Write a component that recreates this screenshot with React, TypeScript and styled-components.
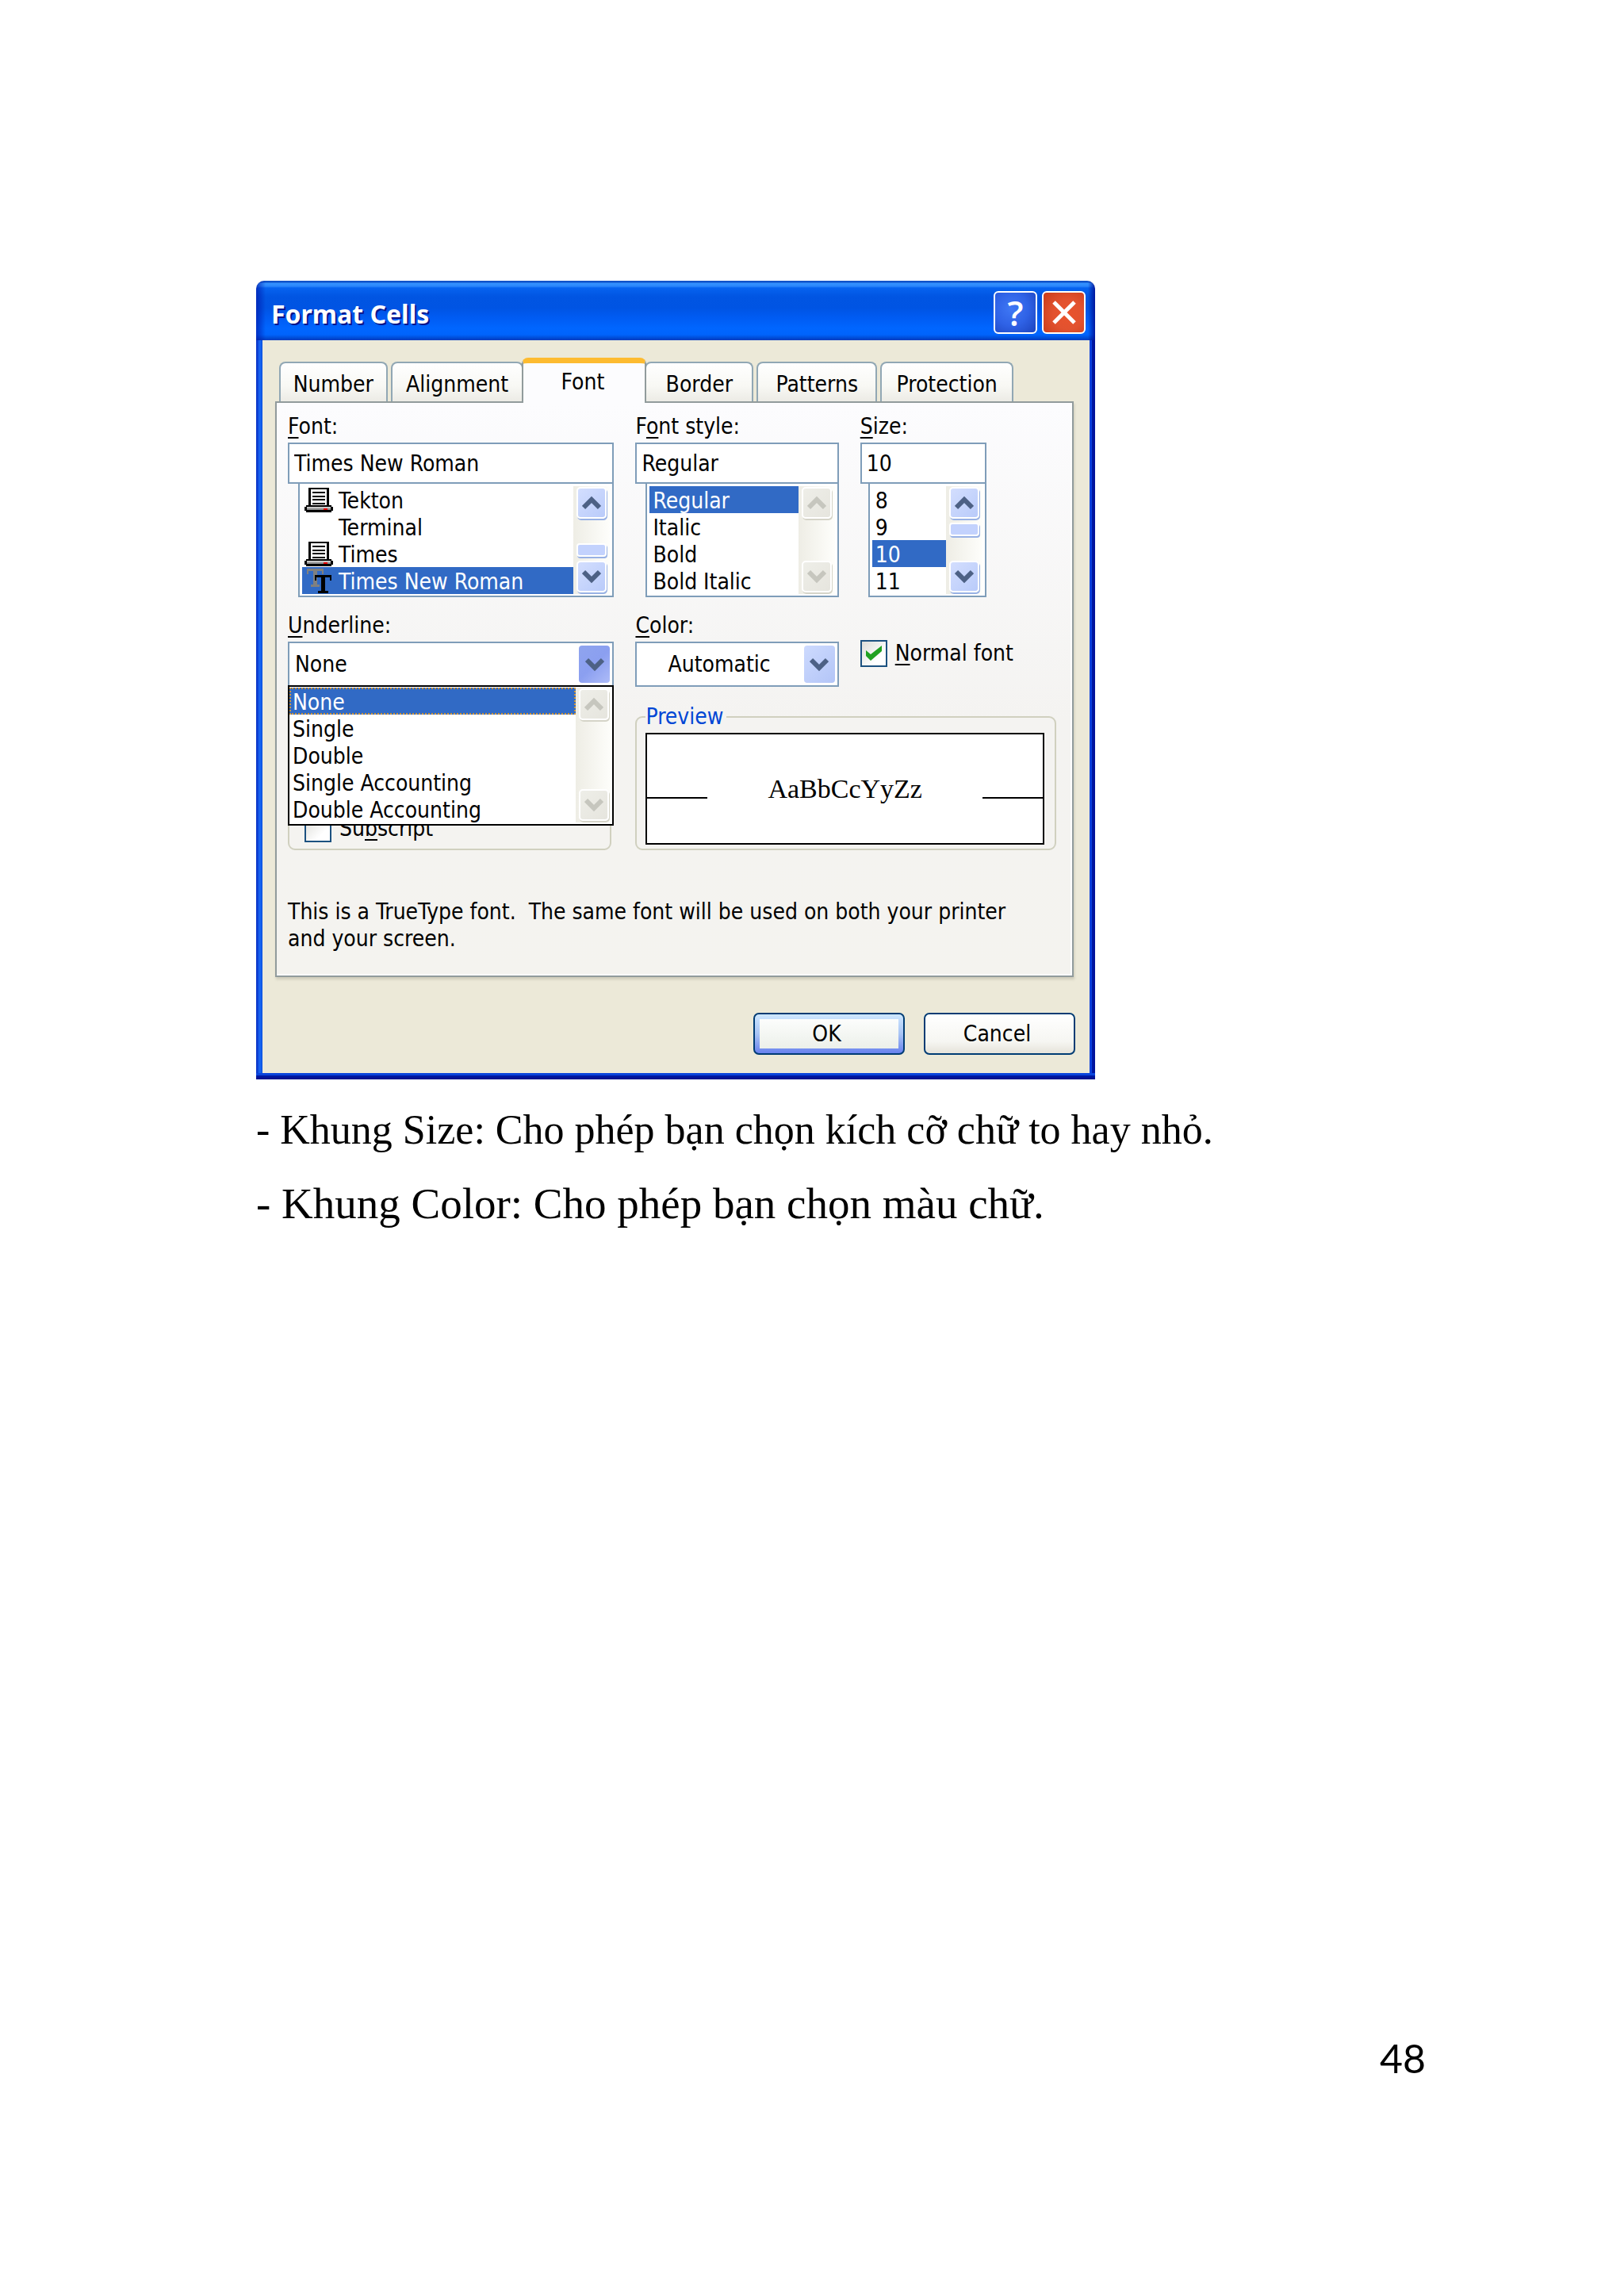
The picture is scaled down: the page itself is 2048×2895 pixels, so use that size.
import React, { useState } from "react";
import styled, { createGlobalStyle, css } from "styled-components";

const uiFont = `"DejaVu Sans Condensed", "Noto Sans", "Open Sans", sans-serif`;
const frameBlue = "#7f9db9";

const GlobalStyle = createGlobalStyle`
  *, *::before, *::after { box-sizing: border-box; }
  body { margin: 0; background: #fff; color: #000; }
  button, input, select { font: inherit; color: inherit; margin: 0; }
`;

const Page = styled.main`
  min-height: 100vh;
  display: flex;
  flex-direction: column;
  padding: 354px 250px 270px 323px;
`;

/* ---------- window frame ---------- */

const Dialog = styled.section`
  width: 100%;
  max-width: 1058px;
  font: 28px/34px ${uiFont};
  background: #ece9d8;
  border-radius: 10px 10px 0 0;
`;

const TitleBar = styled.header`
  height: 75px;
  display: flex;
  align-items: center;
  justify-content: space-between;
  gap: 6px;
  padding: 4px 12px 0 19px;
  border-radius: 10px 10px 0 0;
  background:
    linear-gradient(90deg, rgba(0, 24, 170, 0.7) 0, rgba(0, 24, 170, 0) 12px),
    linear-gradient(270deg, rgba(0, 16, 150, 0.9) 0, rgba(0, 24, 170, 0) 9px),
    linear-gradient(180deg, #0f52c9 0, #0f52c9 2px, #3593ff 3px, #2a86fb 7px, #0663f0 9px, #0155e2 20px, #0054e3 34px,
      #005bf2 46px, #0066ff 60px, #0064fc 68px, #0047cf 73px, #003cc0 75px);
`;

const TitleText = styled.h1`
  flex: 1;
  margin: 0;
  padding-top: 4px;
  font: 700 32px/40px "Noto Sans", "Open Sans", sans-serif;
  color: #fff;
  text-shadow: 2px 2px 0 #06158c;
`;

const CaptionButton = styled.button<{ $close?: boolean }>`
  width: 55px;
  height: 54px;
  display: grid;
  place-items: center;
  padding: 0;
  border: 2px solid #fff;
  border-radius: 6px;
  font: 600 44px/50px "Open Sans", "Noto Sans", sans-serif;
  color: #fff;
  background: ${(p) =>
    p.$close
      ? "radial-gradient(circle at 60% 55%, #e9532c 0, #e2522f 45%, #c93c1a 100%)"
      : "radial-gradient(circle at 40% 40%, #3f78f5 0, #2f62e6 50%, #1c43bd 100%)"};
`;

const Frame = styled.div`
  padding: 22px 7px 8px 8px;
  background:
    linear-gradient(0deg, #00108a 0, #001aa8 5px, #0a45dc 5px, #0a45dc 8px, transparent 8px),
    linear-gradient(270deg, #00129a 0, #0018a4 4px, #0a40dc 4px, #0a40dc 7px, transparent 7px),
    linear-gradient(90deg, #0a32c0 0, #0b3fd6 2px, #1a66f2 4px, #1462f0 6px, #0a4edc 8px, transparent 8px);
`;

/* ---------- tabs ---------- */

const TabList = styled.div`
  display: flex;
  align-items: flex-end;
  gap: 4px;
  padding: 0 96px 0 21px;
  height: 57px;
`;

const Tab = styled.button<{ $grow: number; $active?: boolean }>`
  flex: ${(p) => p.$grow} 1 0;
  min-width: 0;
  padding: 6px 0 0;
  line-height: 42px;
  height: 50px;
  margin-bottom: 2px;
  border: 2px solid #919b9c;
  border-color: #91a7b4 #91a7b4 transparent;
  border-bottom: 0;
  border-radius: 8px 8px 0 0;
  background: linear-gradient(#fff, #f8f8f4 60%, #ecebe5);
  ${(p) =>
    p.$active &&
    css`
      position: relative;
      z-index: 1;
      height: 57px;
      margin: 0 -6px;
      padding: 0 4px 2px 0;
      background: #fcfcfe;
      border-top: 7px solid #ffc73c;
      border-color: #fdbb30 #919b9c transparent;
    `}
`;

const Pane = styled.div`
  margin: -2px 20px 0 16px;
  padding: 13px 20px 29px 14px;
  border: 2px solid #919b9c;
  background: linear-gradient(#fcfcfe 0, #f4f3f1 55%, #f4f3ef 100%);
  box-shadow: inset -2px -2px 0 #fff, 1px 3px 3px #cfccbb;
`;

/* ---------- fields ---------- */

const Fields = styled.div`
  display: grid;
  grid-template-columns: 411fr 256fr 247fr;
  column-gap: 27px;
`;

const Field = styled.div<{ $narrow?: boolean }>`
  max-width: ${(p) => (p.$narrow ? "159px" : "none")};
  margin-bottom: 19px;
`;

const LowField = styled(Field)`
  margin-bottom: 21px;
`;

const Label = styled.label`
  display: block;
  margin-bottom: 3px;
`;

const Mnemonic = styled.u`
  text-decoration-thickness: 2px;
  text-underline-offset: 4px;
  text-decoration-skip-ink: none;
`;

const TextBox = styled.input`
  display: block;
  width: 100%;
  height: 52px;
  padding: 0 6px;
  border: 2px solid ${frameBlue};
  border-radius: 0;
  background: #fff;
  outline: none;
`;

const ListBox = styled.div<{ $indent: number }>`
  display: flex;
  height: 145px;
  margin: -2px 0 0 ${(p) => p.$indent}px;
  padding: 3px 3px 2px;
  border: 2px solid ${frameBlue};
  background: #fff;
`;

const Options = styled.ul`
  flex: 1;
  min-width: 0;
  margin: 0;
  padding: 0;
  list-style: none;
`;

const Option = styled.li<{ $selected?: boolean; $focus?: boolean; $icons?: boolean }>`
  display: flex;
  align-items: center;
  gap: 6px;
  height: 34px;
  padding-left: ${(p) => (p.$icons ? 2 : 4)}px;
  line-height: 38px;
  white-space: nowrap;
  cursor: default;
  color: ${(p) => (p.$selected ? "#fff" : "#000")};
  background: ${(p) => (p.$selected ? "#316ac5" : "transparent")};
  outline: ${(p) => (p.$focus ? "2px dotted #ce953a" : "none")};
  outline-offset: -2px;
`;

const OptionText = styled.span`
  padding-top: 4px;
`;

const IconSlot = styled.span`
  flex: none;
  width: 38px;
  height: 34px;
`;

/* ---------- scroll bars and arrows ---------- */

const Track = styled.div`
  flex: none;
  width: 46px;
  display: flex;
  flex-direction: column;
  align-items: flex-start;
  padding: 1px 2px 2px 4px;
  background: linear-gradient(90deg, #eeede5, #fefefb);
`;

const ScrollButton = styled.button`
  width: 38px;
  height: 40px;
  display: grid;
  place-items: center;
  padding: 0;
  border: 2px solid #fff;
  border-radius: 5px;
  background: linear-gradient(135deg, #d3defe, #b9cbfa);
  box-shadow: 1px 2px 0 #98b1e4;
  color: #4d6185;
  &:disabled {
    background: linear-gradient(135deg, #eeeee8, #e6e5de);
    box-shadow: 1px 2px 0 #d5d4c8;
    color: #c6c6be;
  }
`;

const Gap = styled.span<{ $share: number }>`
  flex: ${(p) => p.$share} 1 0;
`;

const Thumb = styled.span`
  width: 38px;
  height: 17px;
  border: 2px solid #fff;
  border-radius: 4px;
  background: #c3d2fd;
  box-shadow: 1px 2px 0 #98b1e4;
`;

const Combo = styled.div`
  position: relative;
  display: flex;
  height: 57px;
  padding: 3px;
  border: 2px solid ${frameBlue};
  background: #fff;
`;

const ComboSelect = styled.select<{ $indent?: boolean }>`
  flex: 1;
  min-width: 0;
  appearance: none;
  border: 0;
  outline: none;
  padding: 0 0 0 ${(p) => (p.$indent ? 36 : 4)}px;
  background: #fff;
`;

const ComboArrow = styled.span<{ $pressed?: boolean }>`
  flex: none;
  width: 39px;
  display: grid;
  place-items: center;
  border-radius: 4px;
  pointer-events: none;
  color: #4d6185;
  background: ${(p) =>
    p.$pressed ? "linear-gradient(135deg, #8fa4ee, #8b9ff0 50%, #aebcf8)" : "linear-gradient(135deg, #cddafe, #b3c5f7)"};
`;

const Popup = styled.div`
  position: absolute;
  z-index: 2;
  top: 53px;
  left: -2px;
  right: -2px;
  display: flex;
  padding: 1px 0 2px 0;
  border: 2px solid #000;
  background: #fff;
`;

/* ---------- check boxes ---------- */

const CheckLine = styled.label`
  display: flex;
  align-items: center;
  gap: 10px;
  height: 34px;
  line-height: 42px;
  white-space: nowrap;
`;

const CheckBox = styled.span`
  display: grid;
  flex: none;
  width: 34px;
  height: 34px;
  place-items: center;
  & > * {
    grid-area: 1 / 1;
  }
  input {
    appearance: none;
    width: 34px;
    height: 34px;
    border: 2px solid #1c5180;
    background: linear-gradient(135deg, #dcdcd7, #fff 70%);
  }
  svg {
    position: relative;
    pointer-events: none;
  }
`;

const NormalFont = styled.div`
  padding-top: 35px;
`;

/* ---------- groups ---------- */

const EffectsGroup = styled.fieldset`
  min-width: 0;
  height: 170px;
  margin: 15px 3px 0 0;
  padding: 0 19px 8px;
  border: 2px solid #d0d0bf;
  border-radius: 9px;
  display: flex;
  align-items: flex-end;
`;

const PreviewGroup = styled.fieldset`
  grid-column: 2 / 4;
  min-width: 0;
  margin: 0;
  padding: 3px 13px 5px 11px;
  border: 2px solid #d0d0bf;
  border-radius: 9px;
  legend {
    padding: 0 4px 0 0;
    color: #0046d5;
  }
`;

const Sample = styled.div`
  height: 141px;
  display: flex;
  align-items: center;
  justify-content: space-between;
  border: 2px solid #000;
  background: #fff;
  font: 34px/40px "Liberation Serif", serif;
`;

const SampleRule = styled.span`
  width: 76px;
  height: 2px;
  margin-top: 22px;
  background: #000;
`;

const Hint = styled.p`
  margin: 61px 0 0;
  padding-right: 36px;
`;

/* ---------- dialog buttons ---------- */

const Actions = styled.footer`
  display: flex;
  justify-content: flex-end;
  gap: 24px;
  padding: 45px 18px 23px;
`;

const PushButton = styled.button<{ $primary?: boolean }>`
  width: 191px;
  height: 53px;
  padding: 0 6px 0 0;
  line-height: 46px;
  border: 2px solid #003c74;
  border-radius: 7px;
  background: linear-gradient(#fff, #f6f6f2 70%, #e6e3da);
  ${(p) =>
    p.$primary &&
    css`
      background:
        linear-gradient(#fcfdfc, #ecf0ea) 6px 6px / calc(100% - 12px) calc(100% - 12px) no-repeat padding-box,
        linear-gradient(#cee7ff, #a9c5f5 50%, #6982ee);
    `}
`;

/* ---------- document text ---------- */

const Notes = styled.div`
  margin-top: 17px;
`;

const Note = styled.p<{ $size: number }>`
  margin: 0;
  font: ${(p) => p.$size}px/93px "Liberation Serif", serif;
`;

const PageNumber = styled.footer`
  margin-top: auto;
  text-align: right;
  font: 400 50px/60px Lato, sans-serif;
`;

/* ---------- drawings ---------- */

const Chevron = ({ up }: { up?: boolean }) => (
  <svg width="24" height="18" viewBox="0 0 24 18" fill="none" stroke="currentColor" strokeWidth="6" aria-hidden="true">
    <path d={up ? "M2 15 L12 5 L22 15" : "M2 3 L12 13 L22 3"} />
  </svg>
);

const Printer = () => (
  <svg width="38" height="34" viewBox="0 0 38 34" aria-hidden="true" shapeRendering="crispEdges">
    <path d="M6 2h26v24H6z" fill="#000" />
    <path d="M9 4h20v20H9z" fill="#fff" />
    <path d="M11 8h16M11 13h16M11 17h16M11 22h16" stroke="#000" strokeWidth="2" />
    <path d="M3 24h32v2h2v5h-2v2H3v-2H1v-5h2z" fill="#000" />
    <path d="M4 26h30v2H4z" fill="#c8c8c8" />
    <path d="M4 28h30v2H4z" fill="#909090" />
    <path d="M25 28h5v2h-5z" fill="#e80000" />
  </svg>
);

const TrueType = () => (
  <svg width="38" height="34" viewBox="0 0 38 34" aria-hidden="true" shapeRendering="crispEdges">
    <path d="M4 2h21v7h-2v-4h-6v17h3v3H9v-3h3V5H6v4H4z" fill="#808080" />
    <path d="M14 10h21v7h-2v-4h-6v17h4v3H18v-3h4V13h-6v4h-2z" fill="#000" />
  </svg>
);

const Cross = () => (
  <svg width="32" height="32" viewBox="0 0 32 32" stroke="#fff" strokeWidth="5" aria-hidden="true">
    <path d="M3 3 L29 29 M29 3 L3 29" />
  </svg>
);

const Tick = () => (
  <svg width="20" height="20" viewBox="0 0 20 20" fill="#21a121" aria-hidden="true">
    <path d="M0 6 L6 11 L20 0 V7 L6 19 L0 13 Z" />
  </svg>
);

/* ---------- parts ---------- */

type ScrollProps = { disabled?: boolean; before?: number; after?: number };

const ScrollBar = ({ disabled, before = 1, after = 0 }: ScrollProps) => (
  <Track>
    <ScrollButton type="button" disabled={disabled} aria-label="Scroll up">
      <Chevron up />
    </ScrollButton>
    <Gap $share={before} />
    {!disabled && <Thumb />}
    {!disabled && <Gap $share={after} />}
    <ScrollButton type="button" disabled={disabled} aria-label="Scroll down">
      <Chevron />
    </ScrollButton>
  </Track>
);

const tabs = [
  { name: "Number", grow: 137 },
  { name: "Alignment", grow: 169 },
  { name: "Font", grow: 154 },
  { name: "Border", grow: 137 },
  { name: "Patterns", grow: 153 },
  { name: "Protection", grow: 169 },
];

const fonts = [
  { name: "Tekton", icon: <Printer /> },
  { name: "Terminal", icon: null },
  { name: "Times", icon: <Printer /> },
  { name: "Times New Roman", icon: <TrueType /> },
];

const styles = ["Regular", "Italic", "Bold", "Bold Italic"];
const sizes = ["8", "9", "10", "11"];
const underlines = ["None", "Single", "Double", "Single Accounting", "Double Accounting"];

export default function App() {
  const [font, setFont] = useState("Times New Roman");
  const [style, setStyle] = useState("Regular");
  const [size, setSize] = useState("10");
  const [underline, setUnderline] = useState("None");

  return (
    <Page>
      <GlobalStyle />
      <Dialog role="dialog" aria-labelledby="title">
        <TitleBar>
          <TitleText id="title">Format Cells</TitleText>
          <CaptionButton type="button" aria-label="Help">?</CaptionButton>
          <CaptionButton type="button" $close aria-label="Close"><Cross /></CaptionButton>
        </TitleBar>
        <Frame>
          <TabList role="tablist">
            {tabs.map((t) => (
              <Tab key={t.name} type="button" role="tab" $grow={t.grow} $active={t.name === "Font"} aria-selected={t.name === "Font"}>
                {t.name}
              </Tab>
            ))}
          </TabList>
          <Pane role="tabpanel">
            <Fields>
              <Field>
                <Label htmlFor="font"><Mnemonic>F</Mnemonic>ont:</Label>
                <TextBox id="font" value={font} onChange={(e) => setFont(e.target.value)} />
                <ListBox $indent={13}>
                  <Options role="listbox" aria-label="Fonts">
                    {fonts.map((f) => (
                      <Option key={f.name} role="option" $icons $selected={f.name === font} aria-selected={f.name === font} onClick={() => setFont(f.name)}>
                        <IconSlot>{f.icon}</IconSlot>
                        <OptionText>{f.name}</OptionText>
                      </Option>
                    ))}
                  </Options>
                  <ScrollBar before={24} after={4} />
                </ListBox>
              </Field>
              <Field>
                <Label htmlFor="style">F<Mnemonic>o</Mnemonic>nt style:</Label>
                <TextBox id="style" value={style} onChange={(e) => setStyle(e.target.value)} />
                <ListBox $indent={13}>
                  <Options role="listbox" aria-label="Font styles">
                    {styles.map((s) => (
                      <Option key={s} role="option" $selected={s === style} aria-selected={s === style} onClick={() => setStyle(s)}>
                        <OptionText>{s}</OptionText>
                      </Option>
                    ))}
                  </Options>
                  <ScrollBar disabled />
                </ListBox>
              </Field>
              <Field $narrow>
                <Label htmlFor="size"><Mnemonic>S</Mnemonic>ize:</Label>
                <TextBox id="size" value={size} onChange={(e) => setSize(e.target.value)} />
                <ListBox $indent={10}>
                  <Options role="listbox" aria-label="Sizes">
                    {sizes.map((s) => (
                      <Option key={s} role="option" $selected={s === size} aria-selected={s === size} onClick={() => setSize(s)}>
                        <OptionText>{s}</OptionText>
                      </Option>
                    ))}
                  </Options>
                  <ScrollBar before={4} after={24} />
                </ListBox>
              </Field>

              <LowField>
                <Label htmlFor="underline"><Mnemonic>U</Mnemonic>nderline:</Label>
                <Combo>
                  <ComboSelect id="underline" value={underline} onChange={(e) => setUnderline(e.target.value)}>
                    {underlines.map((u) => <option key={u}>{u}</option>)}
                  </ComboSelect>
                  <ComboArrow $pressed><Chevron /></ComboArrow>
                  <Popup>
                    <Options role="listbox" aria-label="Underline styles">
                      {underlines.map((u) => (
                        <Option key={u} role="option" $selected={u === underline} $focus={u === underline} aria-selected={u === underline} onClick={() => setUnderline(u)}>
                          <OptionText>{u}</OptionText>
                        </Option>
                      ))}
                    </Options>
                    <ScrollBar disabled />
                  </Popup>
                </Combo>
              </LowField>
              <LowField>
                <Label htmlFor="color"><Mnemonic>C</Mnemonic>olor:</Label>
                <Combo>
                  <ComboSelect id="color" $indent><option>Automatic</option></ComboSelect>
                  <ComboArrow><Chevron /></ComboArrow>
                </Combo>
              </LowField>
              <NormalFont>
                <CheckLine>
                  <CheckBox><input type="checkbox" defaultChecked /><Tick /></CheckBox>
                  <span><Mnemonic>N</Mnemonic>ormal font</span>
                </CheckLine>
              </NormalFont>

              <EffectsGroup>
                <CheckLine>
                  <CheckBox><input type="checkbox" /></CheckBox>
                  <span>Su<Mnemonic>b</Mnemonic>script</span>
                </CheckLine>
              </EffectsGroup>
              <PreviewGroup>
                <legend>Preview</legend>
                <Sample>
                  <SampleRule />
                  AaBbCcYyZz
                  <SampleRule />
                </Sample>
              </PreviewGroup>
            </Fields>
            <Hint>This is a TrueType font.&nbsp; The same font will be used on both your printer and your screen.</Hint>
          </Pane>
          <Actions>
            <PushButton type="button" $primary>OK</PushButton>
            <PushButton type="button">Cancel</PushButton>
          </Actions>
        </Frame>
      </Dialog>
      <Notes>
        <Note $size={52}>- Khung Size: Cho phép bạn chọn kích cỡ chữ to hay nhỏ.</Note>
        <Note $size={55}>- Khung Color: Cho phép bạn chọn màu chữ.</Note>
      </Notes>
      <PageNumber>48</PageNumber>
    </Page>
  );
}
